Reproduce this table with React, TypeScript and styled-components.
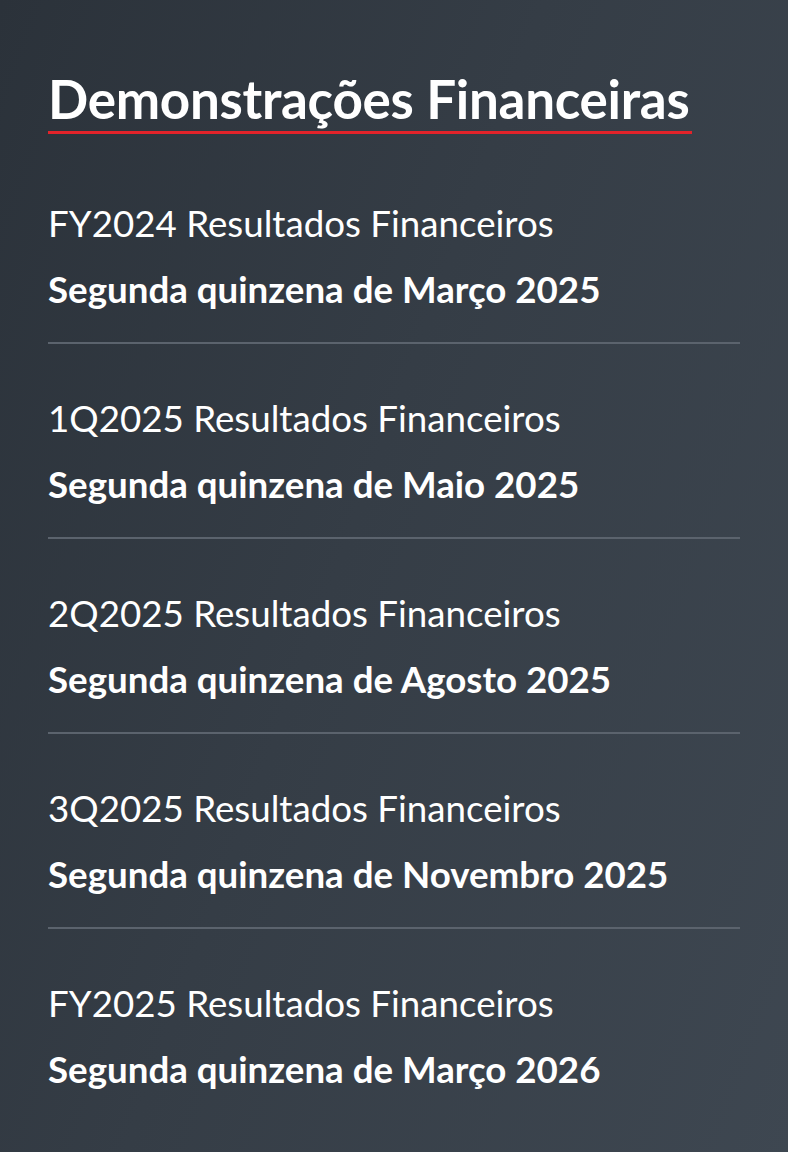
import React from "react";
import styled, { createGlobalStyle } from "styled-components";

const GlobalStyle = createGlobalStyle`
  html, body {
    margin: 0;
    padding: 0;
  }
  body {
    font-family: Lato, "Open Sans", sans-serif;
    background: #333b44;
  }
`;

const Section = styled.section`
  min-height: 1152px;
  box-sizing: border-box;
  padding: 67px 48px 40px;
  background: linear-gradient(110deg, #2b323a 0%, #353d46 45%, #3e4751 100%);
  color: #ffffff;
`;

const Title = styled.h2`
  display: inline-block;
  margin: 0;
  padding-right: 3px;
  font-size: 53px;
  font-weight: 700;
  line-height: 1.2;
  letter-spacing: -0.3px;
  border-bottom: 3px solid #e3232a;
`;

const List = styled.ul`
  list-style: none;
  margin: 0;
  padding: 0;
`;

const Item = styled.li<{ $first?: boolean }>`
  padding: ${(p) => (p.$first ? "65px" : "50px")} 0 29px;
  border-bottom: 2px solid #5b636d;
  &:last-child {
    border-bottom: none;
  }
`;

const Name = styled.div`
  font-size: 36.7px;
  font-weight: 400;
  line-height: 48px;
`;

const When = styled.div`
  margin-top: 18px;
  font-size: 36.7px;
  font-weight: 700;
  line-height: 48px;
`;

const reports = [
  { name: "FY2024 Resultados Financeiros", when: "Segunda quinzena de Março 2025" },
  { name: "1Q2025 Resultados Financeiros", when: "Segunda quinzena de Maio 2025" },
  { name: "2Q2025 Resultados Financeiros", when: "Segunda quinzena de Agosto 2025" },
  { name: "3Q2025 Resultados Financeiros", when: "Segunda quinzena de Novembro 2025" },
  { name: "FY2025 Resultados Financeiros", when: "Segunda quinzena de Março 2026" },
];

const App: React.FC = () => {
  return (
    <>
      <GlobalStyle />
      <Section>
        <Title>Demonstrações Financeiras</Title>
        <List>
          {reports.map((r, i) => (
            <Item key={i} $first={i === 0}>
              <Name>{r.name}</Name>
              <When>{r.when}</When>
            </Item>
          ))}
        </List>
      </Section>
    </>
  );
};

export default App;
